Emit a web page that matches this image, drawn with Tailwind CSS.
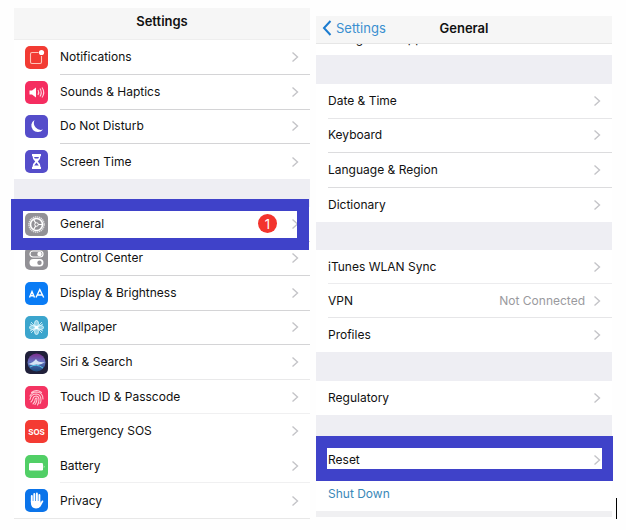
<!DOCTYPE html>
<html lang="en">
<head>
    <meta charset="UTF-8">
    <meta name="viewport" content="width=device-width, initial-scale=1.0">
    <title>Settings</title>
    <script src="https://cdn.jsdelivr.net/npm/@tailwindcss/browser@4"></script>
</head>

<body class="bg-[#fefefe] text-[#111111] font-['Inter','Liberation_Sans',sans-serif] text-[12px] leading-4">

    <!-- Shared chevron -->
    <svg class="hidden">
        <symbol id="chevron" viewBox="0 0 8 12">
            <path d="M1.5 1.5L6.5 6L1.5 10.5" fill="none" stroke="currentColor" stroke-width="1.4" />
        </symbol>
    </svg>

    <main class="relative flex items-start gap-1.5 px-3.5 pt-2">

        <!-- Settings -->
        <section class="relative flex-1 border-b border-[#e8e8e8] bg-white">
            <header class="flex h-8 items-center justify-center border-b border-[#eeeeee] bg-[#f6f6f6] pb-1.5">
                <h1 class="text-[13px] font-semibold">Settings</h1>
            </header>

            <nav class="grid min-h-[139px] auto-rows-fr">
                <a href="#" class="flex items-center gap-3 pl-[11px]">
                    <svg class="size-[23px]" viewBox="0 0 23 23">
                        <rect width="23" height="23" rx="5" fill="#f23b33" />
                        <path d="M13.5 6.5H7A1.5 1.5 0 0 0 5.5 8V16A1.5 1.5 0 0 0 7 17.5H15A1.5 1.5 0 0 0 16.5 16V10" fill="none" stroke="#ffc3b8" stroke-width="1.1" />
                        <circle cx="16.5" cy="6.5" r="2.6" fill="#fff" />
                    </svg>
                    <span class="flex flex-1 items-center self-stretch border-b border-[#d4d4d6] pr-[11px]">
                        <span class="flex-1">Notifications</span>
                        <svg class="h-3 w-2 text-[#c4c4c8]"><use href="#chevron" /></svg>
                    </span>
                </a>
                <a href="#" class="flex items-center gap-3 pl-[11px]">
                    <svg class="size-[23px]" viewBox="0 0 23 23">
                        <rect width="23" height="23" rx="5" fill="#f52d60" />
                        <path d="M4.5 9.5H7L11 6.5V16.5L7 13.5H4.5Z" fill="#fff" />
                        <path d="M13 9Q14.5 11.5 13 14M15 7.5Q17.5 11.5 15 15.5M17 6.5Q20.5 11.5 17 16.5" fill="none" stroke="#ffd3de" stroke-width="1.1" />
                    </svg>
                    <span class="flex flex-1 items-center self-stretch border-b border-[#d4d4d6] pr-[11px]">
                        <span class="flex-1">Sounds &amp; Haptics</span>
                        <svg class="h-3 w-2 text-[#c4c4c8]"><use href="#chevron" /></svg>
                    </span>
                </a>
                <a href="#" class="flex items-center gap-3 pl-[11px]">
                    <svg class="size-[23px]" viewBox="0 0 23 23">
                        <rect width="23" height="23" rx="5" fill="#554dca" />
                        <path d="M9.5 5A6.5 6.5 0 1 0 18 14.5A7 7 0 0 1 9.5 5Z" fill="#fff" />
                    </svg>
                    <span class="flex flex-1 items-center self-stretch border-b border-[#d4d4d6] pr-[11px]">
                        <span class="flex-1">Do Not Disturb</span>
                        <svg class="h-3 w-2 text-[#c4c4c8]"><use href="#chevron" /></svg>
                    </span>
                </a>
                <a href="#" class="flex items-center gap-3 pl-[11px]">
                    <svg class="size-[23px]" viewBox="0 0 23 23">
                        <rect width="23" height="23" rx="5" fill="#554dca" />
                        <path d="M7 4H16V6H15.5Q15.5 9.5 12.8 11.5Q15.5 13.5 15.5 17H16V19H7V17H7.5Q7.5 13.5 10.2 11.5Q7.5 9.5 7.5 6H7Z" fill="#fff" />
                        <path d="M9 7H14L13.2 8.5H9.8ZM11.5 12.5L13.8 15.5H9.2Z" fill="#554dca" />
                    </svg>
                    <span class="flex flex-1 items-center self-stretch pr-[11px]">
                        <span class="flex-1">Screen Time</span>
                        <svg class="h-3 w-2 text-[#c4c4c8]"><use href="#chevron" /></svg>
                    </span>
                </a>
            </nav>

            <div class="h-7 bg-[#eeeef3]"></div>

            <nav class="grid min-h-[311px] auto-rows-fr">
                <a href="#" class="flex items-center gap-3 pl-[11px]">
                    <svg class="size-[23px]" viewBox="0 0 23 23">
                        <rect width="23" height="23" rx="5" fill="#929196" />
                        <circle cx="11.5" cy="11.5" r="7.6" fill="none" stroke="#e2e2e4" stroke-width="1.4" stroke-dasharray="1.4 0.6" />
                        <circle cx="11.5" cy="11.5" r="6" fill="none" stroke="#fff" stroke-width="1.6" />
                        <path d="M11.5 11.5H17.5M11.5 11.5L8.5 6.3M11.5 11.5L8.5 16.7" stroke="#fff" stroke-width="1.2" />
                        <circle cx="11.5" cy="11.5" r="1.8" fill="#929196" stroke="#fff" />
                    </svg>
                    <span class="flex flex-1 items-center self-stretch border-b border-[#d4d4d6] pr-[11px]">
                        <span class="flex-1">General</span>
                        <span class="mr-3.5 flex size-[19px] items-center justify-center rounded-full bg-[#f3342d] text-[13px] text-white">1</span>
                        <svg class="h-3 w-2 text-[#c4c4c8]"><use href="#chevron" /></svg>
                    </span>
                </a>
                <a href="#" class="flex items-center gap-3 pl-[11px]">
                    <svg class="size-[23px]" viewBox="0 0 23 23">
                        <rect width="23" height="23" rx="5" fill="#929196" />
                        <rect x="5" y="4" width="13" height="6" rx="3" fill="none" stroke="#fff" stroke-width="1.2" />
                        <circle cx="14.5" cy="7" r="2.2" fill="#fff" />
                        <rect x="4.5" y="12" width="14" height="7.5" rx="3.7" fill="#fff" />
                        <circle cx="14.5" cy="15.7" r="2.2" fill="#929196" />
                    </svg>
                    <span class="flex flex-1 items-center self-stretch border-b border-[#d4d4d6] pr-[11px]">
                        <span class="flex-1">Control Center</span>
                        <svg class="h-3 w-2 text-[#c4c4c8]"><use href="#chevron" /></svg>
                    </span>
                </a>
                <a href="#" class="flex items-center gap-3 pl-[11px]">
                    <svg class="size-[23px]" viewBox="0 0 23 23">
                        <rect width="23" height="23" rx="5" fill="#0a7cf5" />
                        <path d="M4.5 15.5L7 9.5L9.5 15.5M5.3 13.7H8.7M11 15.5L14.8 7.5L18.7 15.5M12.3 13H17.3" fill="none" stroke="#fff" stroke-width="1.4" />
                    </svg>
                    <span class="flex flex-1 items-center self-stretch border-b border-[#d4d4d6] pr-[11px]">
                        <span class="flex-1">Display &amp; Brightness</span>
                        <svg class="h-3 w-2 text-[#c4c4c8]"><use href="#chevron" /></svg>
                    </span>
                </a>
                <a href="#" class="flex items-center gap-3 pl-[11px]">
                    <svg class="size-[23px]" viewBox="0 0 23 23">
                        <rect width="23" height="23" rx="5" fill="#3ba5cd" />
                        <g fill="#8fd0e6" stroke="#e6f7fc" stroke-width=".8">
                            <ellipse cx="11.5" cy="7.5" rx="2" ry="3" />
                            <ellipse cx="11.5" cy="15.5" rx="2" ry="3" />
                            <ellipse cx="7.5" cy="11.5" rx="3" ry="2" />
                            <ellipse cx="15.5" cy="11.5" rx="3" ry="2" />
                            <path d="M6 6L17 17M17 6L6 17M5 8L18 15M18 8L5 15" />
                        </g>
                        <circle cx="11.5" cy="11.5" r="1.8" fill="#fff" />
                    </svg>
                    <span class="flex flex-1 items-center self-stretch border-b border-[#d4d4d6] pr-[11px]">
                        <span class="flex-1">Wallpaper</span>
                        <svg class="h-3 w-2 text-[#c4c4c8]"><use href="#chevron" /></svg>
                    </span>
                </a>
                <a href="#" class="flex items-center gap-3 pl-[11px]">
                    <svg class="size-[23px]" viewBox="0 0 23 23">
                        <defs>
                            <linearGradient id="siri" x1="0" y1="0" x2="0" y2="1">
                                <stop offset="0" stop-color="#7d2c8c" />
                                <stop offset=".45" stop-color="#6470c0" />
                                <stop offset="1" stop-color="#174a7c" />
                            </linearGradient>
                        </defs>
                        <rect width="23" height="23" rx="5" fill="#20203a" />
                        <circle cx="11.5" cy="11.5" r="9" fill="url(#siri)" />
                        <path d="M3 13Q8 12 11 8Q13 12 20 11Q15 14.5 12 13.5Q8 14.5 3 13Z" fill="#d5e3f5" />
                        <path d="M5 16Q11 12 18 17" fill="none" stroke="#55c8e8" />
                    </svg>
                    <span class="flex flex-1 items-center self-stretch border-b border-[#e9e9ea] pr-[11px]">
                        <span class="flex-1">Siri &amp; Search</span>
                        <svg class="h-3 w-2 text-[#c4c4c8]"><use href="#chevron" /></svg>
                    </span>
                </a>
                <a href="#" class="flex items-center gap-3 pl-[11px]">
                    <svg class="size-[23px]" viewBox="0 0 23 23">
                        <rect width="23" height="23" rx="5" fill="#f43462" />
                        <g fill="none" stroke="#ffc9d4" stroke-width="1.1" stroke-linecap="round">
                            <path d="M6.5 6.5Q11.5 2.5 16.5 6.5M5 10Q7 6 11.5 6Q18 6.5 18 13" />
                            <path d="M5 13.5Q6 8 11.5 8Q16 8.5 16 14Q16 16 15 17.5M6 16Q8 14 8 12.5Q8.5 10 11.5 10Q14 10.5 14 13.5Q14 16.5 12.5 19M8 18Q10.5 16 10.2 13Q11.5 11 12 13Q12 16 10 18.5" />
                        </g>
                    </svg>
                    <span class="flex flex-1 items-center self-stretch border-b border-[#f0f0f1] pr-[11px]">
                        <span class="flex-1">Touch ID &amp; Passcode</span>
                        <svg class="h-3 w-2 text-[#c4c4c8]"><use href="#chevron" /></svg>
                    </span>
                </a>
                <a href="#" class="flex items-center gap-3 pl-[11px]">
                    <span class="flex size-[23px] items-center justify-center rounded-[5px] bg-[#f43b33] text-[8px] font-bold text-white">SOS</span>
                    <span class="flex flex-1 items-center self-stretch border-b border-transparent pr-[11px]">
                        <span class="flex-1">Emergency SOS</span>
                        <svg class="h-3 w-2 text-[#c4c4c8]"><use href="#chevron" /></svg>
                    </span>
                </a>
                <a href="#" class="flex items-center gap-3 pl-[11px]">
                    <svg class="size-[23px]" viewBox="0 0 23 23">
                        <rect width="23" height="23" rx="5" fill="#51cf66" />
                        <rect x="4" y="8" width="14" height="7.5" rx="1.2" fill="#fff" />
                        <path d="M18.8 10.3Q20.2 11.7 18.8 13.2Z" fill="#fff" />
                    </svg>
                    <span class="flex flex-1 items-center self-stretch border-b border-[#f0f0f1] pr-[11px]">
                        <span class="flex-1">Battery</span>
                        <svg class="h-3 w-2 text-[#c4c4c8]"><use href="#chevron" /></svg>
                    </span>
                </a>
                <a href="#" class="flex items-center gap-3 pl-[11px]">
                    <svg class="size-[23px]" viewBox="0 0 23 23">
                        <rect width="23" height="23" rx="5" fill="#0b74ea" />
                        <path d="M6.8 7V13M9.3 5V13M11.9 4.5V13M14.4 6V14" stroke="#fff" stroke-width="1.9" stroke-linecap="round" />
                        <path d="M5.9 12H15.3V14L17 11.5Q18.5 11 18.3 12.5L15.5 17.5Q14 19.5 11 19.5Q5.9 19 5.9 14Z" fill="#fff" />
                    </svg>
                    <span class="flex flex-1 items-center self-stretch pr-[11px]">
                        <span class="flex-1">Privacy</span>
                        <svg class="h-3 w-2 text-[#c4c4c8]"><use href="#chevron" /></svg>
                    </span>
                </a>
            </nav>

            <!-- Highlight around General -->
            <div class="pointer-events-none absolute top-[191px] right-px -left-[3px] h-[51px] border-12 border-[#3f42c9]"></div>
        </section>

        <!-- General -->
        <section class="relative mt-2 flex-1 bg-white">
            <header class="relative flex h-7 items-center justify-center border-b border-[#e6e6e6] bg-[#f6f6f6] pb-1">
                <a href="#" class="absolute left-1.5 flex items-center gap-1 text-[13px] text-[#3a8fd0]">
                    <svg class="h-4 w-2.5" viewBox="0 0 10 16">
                        <path d="M8.5 1L2 8L8.5 15" fill="none" stroke="#1c7cd0" stroke-width="2" />
                    </svg>
                    Settings
                </a>
                <h2 class="text-[13px] font-semibold">General</h2>
            </header>

            <!-- Row scrolled under the header -->
            <div class="flex h-[11px] items-end overflow-hidden pb-2 pl-3">
                <a href="#">Background App Refresh</a>
            </div>

            <div class="h-[29px] bg-[#eeeef3]"></div>

            <nav class="grid min-h-[138px] auto-rows-fr pl-3">
                <a href="#" class="flex items-center border-b border-[#e6e6e8] pr-[11px]">
                    <span class="flex-1">Date &amp; Time</span>
                    <svg class="h-3 w-2 text-[#c4c4c8]"><use href="#chevron" /></svg>
                </a>
                <a href="#" class="flex items-center border-b border-[#dcdcde] pr-[11px]">
                    <span class="flex-1">Keyboard</span>
                    <svg class="h-3 w-2 text-[#c4c4c8]"><use href="#chevron" /></svg>
                </a>
                <a href="#" class="flex items-center border-b border-[#dcdcde] pr-[11px]">
                    <span class="flex-1">Language &amp; Region</span>
                    <svg class="h-3 w-2 text-[#c4c4c8]"><use href="#chevron" /></svg>
                </a>
                <a href="#" class="flex items-center pr-[11px]">
                    <span class="flex-1">Dictionary</span>
                    <svg class="h-3 w-2 text-[#c4c4c8]"><use href="#chevron" /></svg>
                </a>
            </nav>

            <div class="h-7 bg-[#eeeef3]"></div>

            <nav class="grid min-h-[102px] auto-rows-fr pl-3">
                <a href="#" class="flex items-center border-b border-[#ececee] pr-[11px]">
                    <span class="flex-1">iTunes WLAN Sync</span>
                    <svg class="h-3 w-2 text-[#c4c4c8]"><use href="#chevron" /></svg>
                </a>
                <a href="#" class="flex items-center border-b border-[#e6e6e8] pr-[11px]">
                    <span class="flex-1">VPN</span>
                    <span class="mr-2 text-[#9a9a9e]">Not Connected</span>
                    <svg class="h-3 w-2 text-[#c4c4c8]"><use href="#chevron" /></svg>
                </a>
                <a href="#" class="flex items-center pr-[11px]">
                    <span class="flex-1">Profiles</span>
                    <svg class="h-3 w-2 text-[#c4c4c8]"><use href="#chevron" /></svg>
                </a>
            </nav>

            <div class="h-[29px] bg-[#eeeef3]"></div>

            <a href="#" class="flex h-[34px] items-center pr-[11px] pl-3">
                <span class="flex-1">Regulatory</span>
                <svg class="h-3 w-2 text-[#c4c4c8]"><use href="#chevron" /></svg>
            </a>

            <div class="h-7 bg-[#eeeef3]"></div>

            <a href="#" class="flex h-[34px] items-center pr-[11px] pl-3">
                <span class="flex-1">Reset</span>
                <svg class="h-3 w-2 text-[#c4c4c8]"><use href="#chevron" /></svg>
            </a>
            <a href="#" class="flex h-[34px] items-center pl-3 text-[#3a88b8]">Shut Down</a>

            <div class="h-1.5 bg-[#f0f0f2]"></div>

            <!-- Highlight around Reset -->
            <div class="pointer-events-none absolute top-[420px] -right-px left-0 h-[45px] border-x-11 border-y-12 border-[#3f42c9]"></div>
        </section>

        <!-- Text caret -->
        <div class="absolute right-[9px] bottom-0 h-[21px] w-px bg-black"></div>
    </main>

</body>
</html>
